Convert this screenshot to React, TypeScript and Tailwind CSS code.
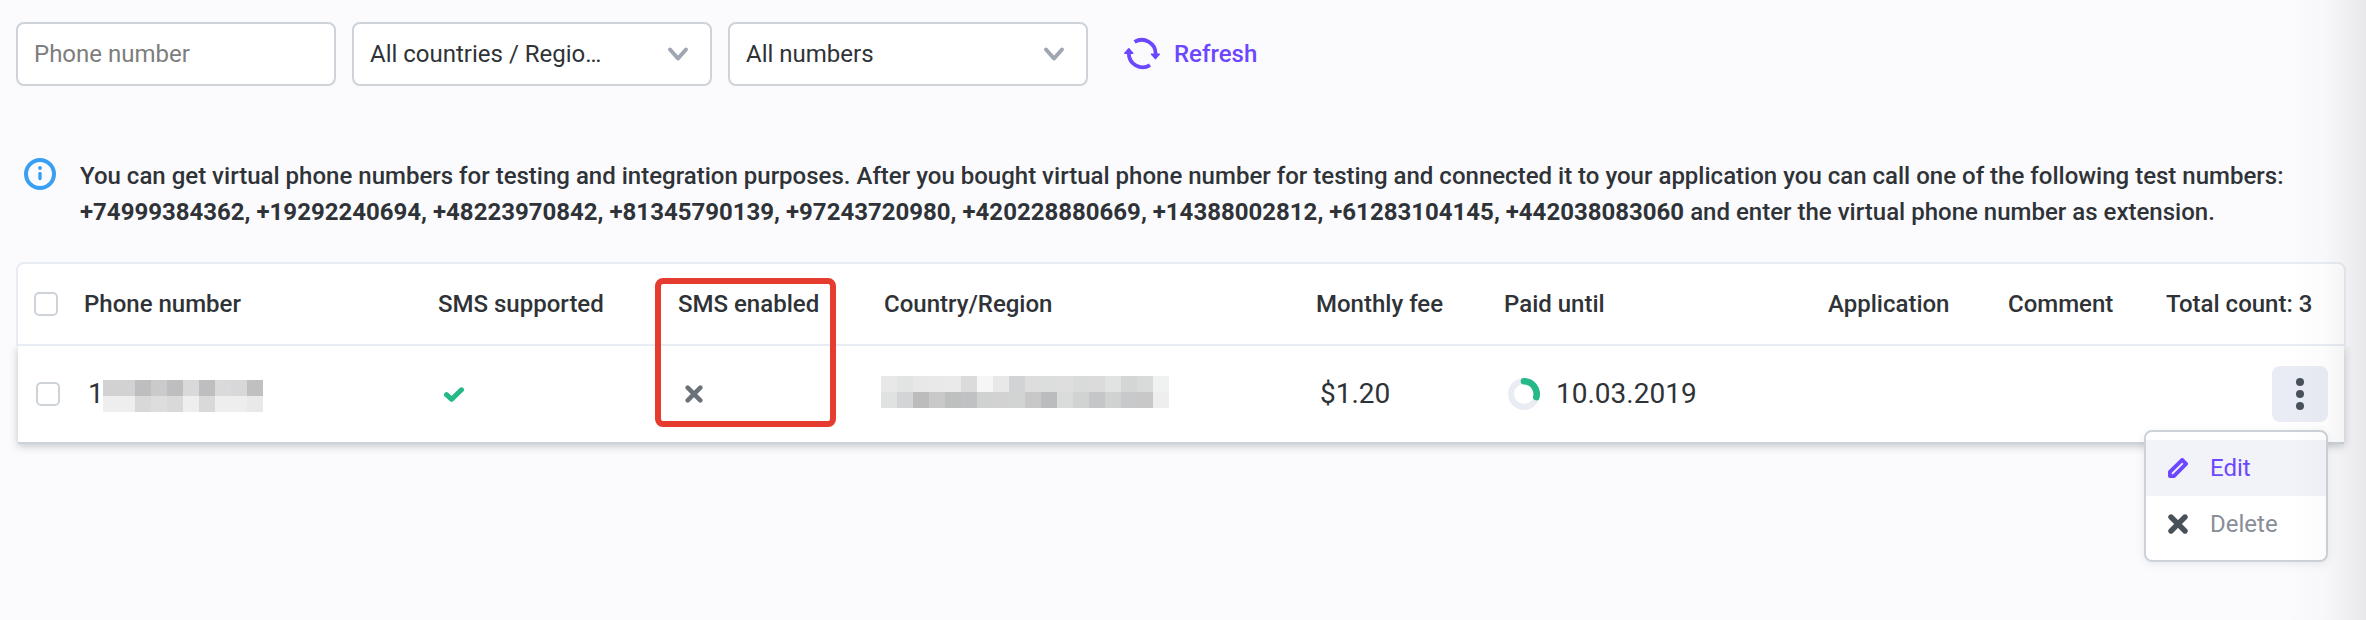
import React from "react";

const phoneMosaic = [
  ["#d1d2d1", "#d1d2d1", "#bdbec0", "#cacaca", "#bdbec0", "#d9d9d9", "#bdbec0", "#dadada", "#d7d8da", "#c0c0c0"],
  ["#eeeeee", "#eeeeee", "#d8d8d8", "#dcdedd", "#d9d9d9", "#eeeeee", "#d9d9d9", "#eeeeee", "#eeeeee", "#e8eae9"],
];

const regionMosaic = [
  ["#e8e8e8", "#e2e4e3", "#e8e8e8", "#e9e9e9", "#eaeaea", "#dbdbdb", "#f6f6f6", "#e8e8e8", "#d2d3d5", "#dddddd", "#dcdedd", "#dedede", "#d9dbda", "#dbdbdb", "#e1e3e2", "#d4d6d5", "#d9dbda", "#f0f2f1"],
  ["#e0e2e1", "#d3d4d6", "#bcbcbc", "#c9c9c9", "#bec0bf", "#c0c1c3", "#d0d2d1", "#d2d2d2", "#d2d4d3", "#c8c8c8", "#bbbcbe", "#dadcdb", "#d1d3d2", "#c5c6c8", "#d0d2d1", "#c8c9cb", "#c8c8c8", "#eeeeee"],
];

function Mosaic({ rows }: { rows: string[][] }) {
  return (
    <div className="flex flex-col">
      {rows.map((row, i) => (
        <div key={i} className="flex">
          {row.map((color, j) => (
            <span key={j} className="size-4" style={{ backgroundColor: color }} />
          ))}
        </div>
      ))}
    </div>
  );
}

function Select({ label }: { label: string }) {
  return (
    <div className="flex h-16 w-[360px] items-center justify-between rounded-lg border-2 border-[#ced3d9] bg-white pr-[21px] pl-4 text-[#2f3337]">
      <span>{label}</span>
      <svg width="22" height="16" viewBox="0 0 22 16" fill="none" stroke="#a0a5b2" strokeWidth="4" strokeLinecap="round" strokeLinejoin="round">
        <path d="M3 3.5l8 9 8-9" />
      </svg>
    </div>
  );
}

function Checkbox() {
  return <span className="block size-6 rounded-[5px] border-2 border-[#ced3d9] bg-white" />;
}

function Cross({ size, color, weight }: { size: number; color: string; weight: number }) {
  return (
    <svg width={size} height={size} viewBox="0 0 20 20" fill="none" stroke={color} strokeWidth={weight} strokeLinecap="round">
      <path d="M3 3l14 14M17 3L3 17" />
    </svg>
  );
}

const columns = "grid grid-cols-[66px_354px_240px_206px_432px_188px_324px_180px_158px_1fr]";

export default function App() {
  return (
    <div className="relative h-[620px] w-[2366px] overflow-hidden bg-[#fbfbfe] font-['Roboto',sans-serif] text-2xl text-[#2f3337]">
      <div className="flex items-center pt-[22px] pl-4">
        <input
          placeholder="Phone number"
          className="mr-4 h-16 w-80 rounded-lg border-2 border-[#ced3d9] bg-white px-4 placeholder:text-[#7d7d7d]"
        />
        <div className="flex gap-4">
          <Select label="All countries / Regio…" />
          <Select label="All numbers" />
        </div>
        <button className="ml-9 flex items-center gap-[14px] font-medium text-[#6c47ff]">
          <svg width="36" height="36" viewBox="0 0 36 36" fill="none" stroke="#6c47ff" strokeWidth="3.8">
            <path d="M10.6 5.9A13.9 13.9 0 0 1 31.6 18.5" />
            <path d="M26 29.2A13.9 13.9 0 0 1 4.8 17" />
            <path d="M27.6 18.2h7.6l-3.8 4.4z" fill="#6c47ff" strokeWidth="1.6" strokeLinejoin="round" />
            <path d="M.9 17.2h7.8L4.8 12.9z" fill="#6c47ff" strokeWidth="1.6" strokeLinejoin="round" />
          </svg>
          Refresh
        </button>
      </div>

      <div className="mt-[72px] flex gap-6 pl-6">
        <svg width="32" height="32" viewBox="0 0 32 32" fill="none" stroke="#399ff2" strokeLinecap="round">
          <circle cx="16" cy="16" r="14" strokeWidth="4" />
          <path d="M16 15.5v5" strokeWidth="3.4" />
          <path d="M16 9.8v.2" strokeWidth="3.8" />
        </svg>
        <p className="leading-9 font-medium tracking-[0.006px] whitespace-nowrap">
          You can get virtual phone numbers for testing and integration purposes. After you bought virtual phone number for testing and connected it to your application you can call one of the following test numbers:
          <br />
          <b className="font-bold">
            +74999384362, +19292240694, +48223970842, +81345790139, +97243720980, +420228880669, +14388002812, +61283104145, +442038083060
          </b>{" "}
          and enter the virtual phone number as extension.
        </p>
      </div>

      <div className="mt-8 ml-4 w-[2330px]">
        <div className={`${columns} h-[84px] items-center rounded-t-lg border-2 border-[#e8ecf3] bg-white font-medium whitespace-nowrap`}>
          <div className="pl-4"><Checkbox /></div>
          <div>Phone number</div>
          <div>SMS supported</div>
          <div>SMS enabled</div>
          <div>Country/Region</div>
          <div>Monthly fee</div>
          <div>Paid until</div>
          <div>Application</div>
          <div>Comment</div>
          <div>Total count: 3</div>
        </div>
        <div className={`${columns} mx-0.5 h-[98px] items-center border-b-2 border-[#ccd3d9] bg-white text-[28px] shadow-[0_2px_8px_rgba(60,70,80,0.3)] [clip-path:inset(0_-12px_-16px_-12px)]`}>
          <div className="pl-[18px]"><Checkbox /></div>
          <div className="flex items-center pl-1">
            <span className="w-[15px]">1</span>
            <div className="pt-1"><Mosaic rows={phoneMosaic} /></div>
          </div>
          <div className="pl-[5px]">
            <svg width="22" height="17" viewBox="0 0 22 17" fill="none" stroke="#25b888" strokeWidth="5" strokeLinecap="round" strokeLinejoin="round">
              <path d="M3.5 8.6l5.2 4.7L18.5 3.8" />
            </svg>
          </div>
          <div className="pl-[7px]"><Cross size={18} color="#6a7178" weight={5} /></div>
          <div className="-ml-[3px] pb-1"><Mosaic rows={regionMosaic} /></div>
          <div className="pl-1">$1.20</div>
          <div className="flex items-center gap-4 pl-1">
            <svg width="32" height="32" viewBox="0 0 32 32" fill="none" strokeWidth="6" strokeLinecap="round">
              <circle cx="16" cy="16" r="13" stroke="#e9ecf3" />
              <path d="M16 3.3a12.7 12.7 0 0 1 12.3 15.8" stroke="#25b888" strokeWidth="6.6" />
            </svg>
            10.03.2019
          </div>
          <div />
          <div />
          <div className="flex justify-end pr-4">
            <button className="flex size-14 flex-col items-center justify-center gap-1 rounded-lg bg-[#e9ecf4]">
              <span className="size-2 rounded-full bg-[#485059]" />
              <span className="size-2 rounded-full bg-[#485059]" />
              <span className="size-2 rounded-full bg-[#485059]" />
            </button>
          </div>
        </div>
      </div>

      <div className="absolute top-[278px] left-[655px] h-[149px] w-[181px] rounded-lg border-[6px] border-[#e63c2f]" />

      <div className="absolute top-[430px] left-[2144px] h-[132px] w-[184px] rounded-lg border-2 border-[#ccd2d8] bg-white pt-2 shadow-[0_2px_8px_rgba(60,70,80,0.1)]">
        <div className="flex h-14 items-center gap-[22px] bg-[#f2f3f8] pl-[22px] text-[#6c47ff]">
          <svg width="20" height="20" viewBox="0 0 20 20" fill="none" stroke="#6c47ff" strokeWidth="3.8" strokeLinejoin="round">
            <path d="M1.9 18.1v-4.2L14.2 1.9l3.9 3.9L5.9 18.1z" />
          </svg>
          Edit
        </div>
        <div className="flex h-14 items-center gap-[22px] pl-[22px] text-[#878e97]">
          <Cross size={20} color="#485059" weight={5.4} />
          Delete
        </div>
      </div>

      <div className="pointer-events-none absolute top-0 right-0 h-full w-20 bg-linear-to-r from-black/0 via-black/[0.015] to-black/[0.075]" />
    </div>
  );
}
